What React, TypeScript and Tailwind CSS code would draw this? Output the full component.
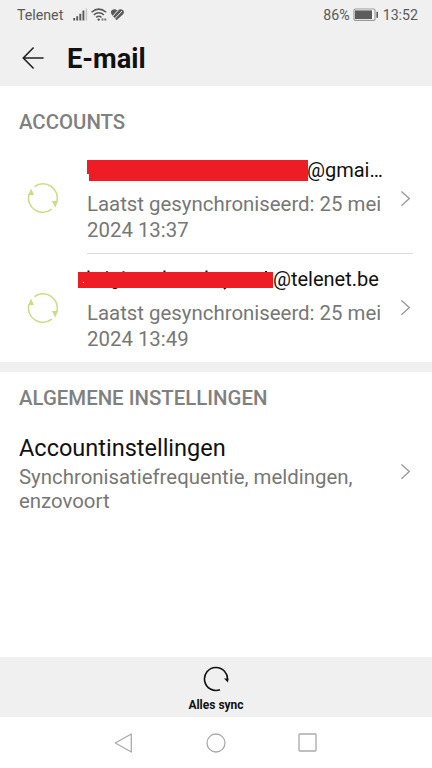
import React from "react";

type Account = {
  domain: string;
  synced: string;
};

const accounts: Account[] = [
  { domain: "@gmai…", synced: "2024 13:37" },
  { domain: "@telenet.be", synced: "2024 13:49" },
];

function Chevron() {
  return (
    <svg width="12" height="18" viewBox="0 0 12 18" fill="none" stroke="#9a9a9a" strokeWidth="1.4">
      <path d="M.4 1.4 L8.3 8.6 L.4 15.8" />
    </svg>
  );
}

function SyncIcon() {
  return (
    <svg width="32" height="32" viewBox="0 0 32 32" fill="none" stroke="#c9dc84" strokeWidth="1.5">
      <path d="M7.4 4.7 A14.3 14.3 0 0 1 29.8 20" />
      <path d="M24.8 27.2 A14.3 14.3 0 0 1 2.1 12" />
      <path d="M4 6.6 L6.9 12.9 L1.2 13.2 Z" fill="#c9dc84" stroke="none" />
      <path d="M24.9 18.9 L31 18.9 L28.3 25.4 Z" fill="#c9dc84" stroke="none" />
    </svg>
  );
}

function StatusBar() {
  return (
    <div className="flex h-[30px] items-center justify-between pl-[17px] pr-[14px] text-[14.2px] text-[#5a5a5a]">
      <div className="flex items-center">
        <span className="w-[56px] pt-[2px]">Telenet</span>
        <svg width="52" height="16" viewBox="0 0 52 16" fill="none">
          <path d="M1.2 13.5V11M4.2 13.5V9.2M7.3 13.5V6.8M10.4 13.5V3.4" stroke="#5a5a5a" strokeWidth="1.9" />
          <path d="M13.4 13.5V1.5" stroke="#c4c4c4" strokeWidth="1.4" />
          <path d="M18.5 5.2Q25.8 -1 33.2 5.2M20.8 7.9Q25.8 3.6 30.9 7.9M23.2 10.4Q25.8 8.2 28.5 10.4" stroke="#5a5a5a" strokeWidth="1.5" />
          <circle cx="25.7" cy="12.6" r="1.2" fill="#5a5a5a" />
          <path d="M28.5 12.6h5" stroke="#777" strokeWidth="2" strokeDasharray="2 .8" />
          <path d="M43.6 13.2L39 8Q36.8 5 39 3Q41.6 1 44.4 3.6Q47.4 1 49.9 3Q52 5.2 49.8 7.6Z" fill="#5a5a5a" />
          <path d="M38.6 10.4L45.2 3.2M41.4 12L49 4" stroke="#f0f0f0" strokeWidth="1" />
        </svg>
      </div>
      <div className="flex items-center">
        <span className="pt-[2px]">86%</span>
        <svg className="mr-[4px] ml-[3px]" width="26" height="14" viewBox="0 0 26 14">
          <rect x="1" y="1" width="21" height="11.4" rx="1.4" fill="#fafafa" stroke="#999" strokeWidth="1.2" />
          <rect x="2" y="2.4" width="17" height="8.6" fill="#5c5c5c" />
          <rect x="23.4" y="3.8" width="1.6" height="6" fill="#5c5c5c" />
        </svg>
        <span className="pt-[2px]">13:52</span>
      </div>
    </div>
  );
}

function AccountRow({ account, first }: { account: Account; first: boolean }) {
  return (
    <div className="flex pl-[27px]">
      <div className={first ? "w-[60px] pt-[31px]" : "w-[60px] pt-[38px]"}>
        <SyncIcon />
      </div>
      <div className={first ? "h-[103px] w-[326px] border-b border-[#dedede]" : "h-[108px] w-[326px] pt-[6px]"}>
        <div className="relative flex h-[39px] pt-[6px] text-[20px] leading-[27px] text-[#111]">
          {first ? (
            <svg className="absolute top-[8px] left-0" width="221" height="22" viewBox="0 0 221 22">
              <path d="M0 1H221V22H2V15H0Z" fill="#ee1c25" />
            </svg>
          ) : (
            <svg className="absolute top-[9px] -left-[9px]" width="196" height="24" viewBox="0 0 196 24">
              <path d="M10.5 1.5V5M29 2.2V5M45.5 2.2V5M86.5 1.5V5M128.5 1.5V5M188 2V5" stroke="#111" strokeWidth="2" />
              <path d="M33.5 17.2Q37 21.4 40.5 17.2M148 18L146 20" fill="none" stroke="#111" strokeWidth="2" />
              <rect y="3" width="195" height="16" fill="#ee1c25" />
              <rect x="5" y="13" width="1" height="1" fill="#fff" />
            </svg>
          )}
          <span className={first ? "ml-[220px]" : "ml-[186px]"}>{account.domain}</span>
        </div>
        <div className="flex items-start justify-between">
          <p className="pt-[1px] text-[20.4px] leading-[26.4px] whitespace-nowrap text-[#777]">
            Laatst gesynchroniseerd: 25 mei
            <br />
            {account.synced}
          </p>
          <Chevron />
        </div>
      </div>
    </div>
  );
}

function App() {
  return (
    <div className="flex h-[768px] w-[432px] flex-col overflow-hidden bg-white font-['Roboto',sans-serif]">
      <header className="h-[86px] bg-[#f0f0f0]">
        <StatusBar />
        <div className="flex h-[56px] items-center pl-[22px]">
          <svg width="24" height="24" viewBox="0 0 24 24" fill="none" stroke="#222" strokeWidth="1.6">
            <path d="M11.6 1.5L1.3 12L11.6 22.5M1.3 12H21.6" />
          </svg>
          <h1 className="mt-[2px] ml-[21px] text-[27.3px] font-bold text-[#111]">E-mail</h1>
        </div>
      </header>

      <main className="flex-1">
        <section className="h-[276px]">
          <h2 className="h-[65px] pt-[22px] pl-[19px] text-[20.4px] leading-[28px] font-medium text-[#808080]">ACCOUNTS</h2>
          {accounts.map((account, i) => (
            <AccountRow key={account.domain} account={account} first={i === 0} />
          ))}
        </section>
        <div className="h-[10px] bg-[#f0f0f0]" />
        <section className="pr-[19px] pl-[19px]">
          <h2 className="pt-[12px] text-[20.4px] leading-[28px] font-medium text-[#808080]">ALGEMENE INSTELLINGEN</h2>
          <div className="mt-[22px] flex items-center justify-between">
            <div>
              <p className="text-[23.5px] leading-[28px] text-[#111]">Accountinstellingen</p>
              <p className="mt-[3px] text-[20.4px] leading-[24px] whitespace-nowrap text-[#777]">
                Synchronisatiefrequentie, meldingen,
                <br />
                enzovoort
              </p>
            </div>
            <div className="pb-[3px]">
              <Chevron />
            </div>
          </div>
        </section>
      </main>

      <div className="flex h-[60px] flex-col items-center bg-[#f0f0f0] pt-[9px]">
        <svg width="26" height="26" viewBox="0 0 26 26" fill="none" stroke="#111" strokeWidth="1.6">
          <path d="M17 23.8A11.5 11.5 0 1 1 24.4 14.5" />
          <path d="M21 12.4L25.4 12.4L25 16.6Z" fill="#111" stroke="none" />
        </svg>
        <span className="mt-[4px] text-[12px] leading-[18px] font-bold text-[#111]">Alles sync</span>
      </div>
      <nav className="flex h-[51px] items-center justify-between pr-[115px] pl-[114px]">
        <svg width="19" height="20" viewBox="0 0 19 20" fill="none" stroke="#aaa" strokeWidth="1.3" strokeLinejoin="round">
          <path d="M1.3 10L17.3 1V19Z" />
        </svg>
        <svg width="20" height="20" viewBox="0 0 20 20" fill="none" stroke="#aaa" strokeWidth="1.3">
          <circle cx="10" cy="10" r="9" />
        </svg>
        <svg width="19" height="19" viewBox="0 0 19 19" fill="none" stroke="#aaa" strokeWidth="1.3">
          <rect x="1" y="1" width="17" height="17" rx=".8" />
        </svg>
      </nav>
    </div>
  );
}

export default App;
